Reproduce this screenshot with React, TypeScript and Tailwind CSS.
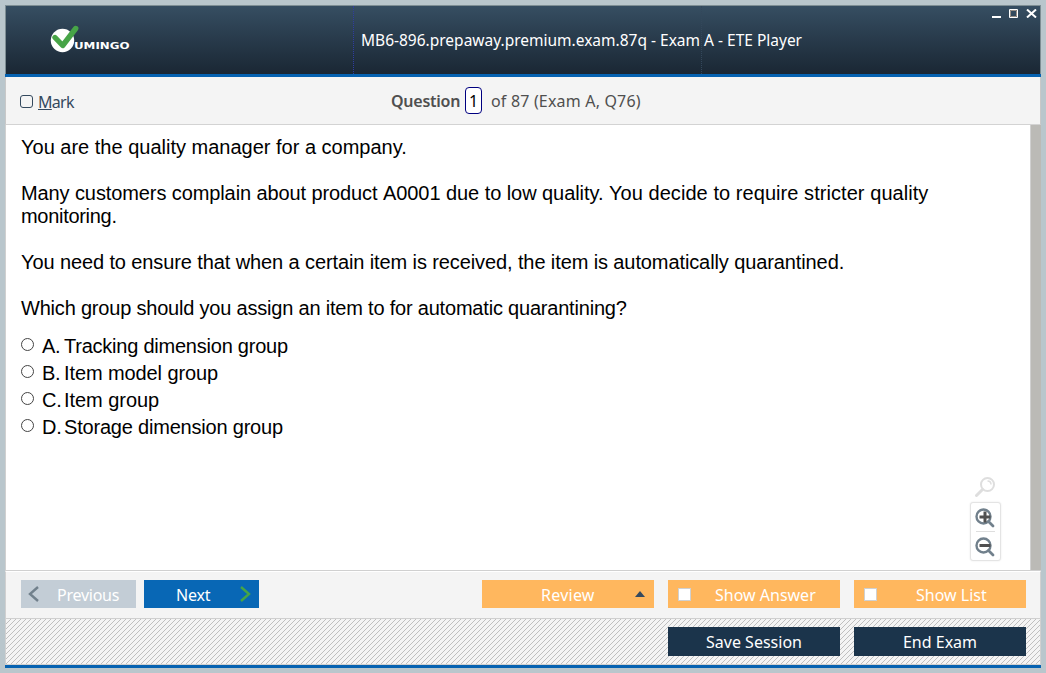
import React from 'react';

const ui = "font-['Noto_Sans',sans-serif]";

function Line({ children, className }: { children: React.ReactNode; className: string }) {
  return <span className={`block whitespace-nowrap ${className}`}>{children}</span>;
}

function Logo() {
  return (
    <svg width="82" height="32" viewBox="0 0 82 32" className="mt-[18px] ml-[43px] block">
      <circle cx="13.5" cy="16.5" r="11.7" fill="#fff" />
      <path d="M6 13.5 L13.7 21.5 L26.7 4.5" fill="none" stroke="#47a447" strokeWidth="5.4" strokeLinecap="round" strokeLinejoin="round" />
      <text x="25" y="25" fill="#fff" fontSize="9.5" fontWeight="bold" fontFamily="DejaVu Sans" textLength="55.5" lengthAdjust="spacingAndGlyphs">UMINGO</text>
    </svg>
  );
}

function Answer({ letter, text, track }: { letter: string; text: string; track: string }) {
  return (
    <label className="flex h-[27px] items-center">
      <span className="mb-[4px] h-[13px] w-[13px] rounded-full border border-[#444] bg-white" />
      <span className="ml-2 w-[22px] tracking-[-0.3px]">{letter}.</span>
      <Line className={track}>{text}</Line>
    </label>
  );
}

function Magnifier({ plus }: { plus: boolean }) {
  return (
    <svg width="20" height="20" viewBox="0 0 20 20" fill="none" className="mr-[2px] shrink-0">
      <circle cx="8.5" cy="8.5" r="7" stroke="#71808c" strokeWidth="2.4" />
      <path d="M13.5 13.5 L18 18" stroke="#71808c" strokeWidth="2.8" strokeLinecap="round" />
      <path d={plus ? 'M4.5 9H15.5M10 3.5V14.5' : 'M4.5 8.5H15.5'} stroke="#505050" strokeWidth="3" />
    </svg>
  );
}

function Hatching() {
  return (
    <svg className="absolute inset-0 h-full w-full" shapeRendering="crispEdges">
      <defs>
        <pattern id="hatch" width="5" height="5" patternUnits="userSpaceOnUse">
          <path d="M4 0h1v1h-1zM3 1h1v1h-1zM2 2h1v1h-1zM1 3h1v1h-1zM0 4h1v1h-1z" fill="#bfbfbf" />
        </pattern>
      </defs>
      <rect width="100%" height="100%" fill="url(#hatch)" />
    </svg>
  );
}

export default function App() {
  return (
    <div className={`h-[673px] w-[1046px] overflow-hidden bg-[#b9c6cc] p-[5px] ${ui}`}>
      <div className="flex h-[663px] w-[1036px] flex-col">
        <header className="flex h-[69px] border border-b-0 border-[#7e8e94] bg-linear-to-b from-[#364e62] to-[#1a2734] text-white">
          <div className="w-[347px] shrink-0"><Logo /></div>
          <div className="w-[349px] shrink-0 border-x border-dotted border-l-[#2f3ca0] border-r-[#33475b] pt-[22px] pl-[7px]">
            <Line className="text-[15.5px] leading-6">MB6-896.prepaway.premium.exam.87q - Exam A - ETE Player</Line>
          </div>
          <div className="flex flex-1 items-start justify-end gap-2 pt-[3px] pr-[3px]">
            <svg width="9" height="9" className="block"><path d="M0 8H9" stroke="#fff" strokeWidth="2" /></svg>
            <svg width="9" height="9" className="block"><path d="M.5 .5H8.5V8.5H.5Z" stroke="#fff" fill="none" /><path d="M1.5 1.5H7.5V7.5H1.5Z" stroke="#998f86" fill="none" /></svg>
            <svg width="11" height="9" className="block"><path d="M1 .5L10 8.5M10 .5L1 8.5" stroke="#fff" strokeWidth="2" /></svg>
          </div>
        </header>
        <div className="h-[3px] bg-[#0562b1]" />
        <div className="flex h-[48px] border-x border-b border-x-[#c8c8c8] border-b-[#d3d3d3] bg-[#f4f4f4]">
          <div className="flex w-[385px] items-start pl-[14px] text-[#34495e]">
            <span className="mt-[18px] h-[13px] w-[13px] rounded-[3px] border border-[#34495e]" />
            <Line className="mt-[13px] ml-[5px] text-[16px] leading-6 tracking-[-0.7px]"><u>M</u>ark</Line>
          </div>
          <div className="flex items-start text-[16px] leading-6 text-[#4f4f4f]">
            <Line className="mt-3 w-[74px] font-semibold tracking-[-0.25px]">Question</Line>
            <span className="mt-[10px] flex h-[27px] w-[17px] items-center justify-center rounded-[4px] border border-[#000080] bg-white text-black">1</span>
            <Line className="mt-3 ml-[9px] tracking-[0.18px]">of 87 (Exam A, Q76)</Line>
          </div>
        </div>
        <main className="flex h-[446px] border-b border-l border-[#d0d0d0] bg-white">
          <div className="relative flex-1 pt-[11px] pl-[15px] font-['Liberation_Sans',sans-serif] text-[20px] leading-[23px] text-black">
            <Line className="">You are the quality manager for a company.</Line>
            <div className="mt-[23px]">
              <Line className="">
                <span className="tracking-[-0.1px]">Many customers complain about product </span>
                <span className="tracking-[-0.06px]">A0001 due to low quality. </span>
                <span className="tracking-[0.06px]">You decide to require stricter quality</span>
              </Line>
              <Line className="tracking-[-0.3px]">monitoring.</Line>
            </div>
            <Line className="mt-[23px] tracking-[-0.105px]">You need to ensure that when a certain item is received, the item is automatically quarantined.</Line>
            <Line className="mt-[23px] tracking-[-0.2px]">Which group should you assign an item to for automatic quarantining?</Line>
            <div className="mt-[13px]">
              <Answer letter="A" text="Tracking dimension group" track="tracking-[-0.23px]" />
              <Answer letter="B" text="Item model group" track="tracking-[-0.1px]" />
              <Answer letter="C" text="Item group" track="tracking-[-0.05px]" />
              <Answer letter="D" text="Storage dimension group" track="tracking-[-0.2px]" />
            </div>
            <div className="absolute top-[352px] left-[964px] flex w-[31px] flex-col items-center">
              <svg width="20" height="20" viewBox="0 0 20 20" fill="none" stroke="#dedede" className="mr-[2px]">
                <circle cx="12.5" cy="7.5" r="6.5" strokeWidth="2" />
                <path d="M7.5 12.5L1.5 18.5" strokeWidth="3" strokeLinecap="round" />
                <path d="M12.5 4Q16 4 16 7.5" strokeWidth="1.5" />
              </svg>
              <div className="mt-[5px] flex h-[59px] w-[31px] flex-col items-center rounded-[3px] border border-[#e4e4e4] bg-white pt-[5px] shadow-[0_0_2px_#e8e8e8]">
                <Magnifier plus={true} />
                <div className="mt-[3px] mb-[5px] h-px w-[19px] shrink-0 bg-[#dedede]" />
                <Magnifier plus={false} />
              </div>
            </div>
          </div>
          <div className="w-[11px] border-l border-[#d0d0d0] bg-[#bbbab6]" />
        </main>
        <div className="flex h-[48px] items-start border-x border-t border-b border-x-[#d0d0d0] border-t-white border-b-[#d0d0d0] bg-[#f4f4f4] pt-[8px] pl-[15px] text-[16px] text-white">
          <button className="flex h-7 w-[115px] items-center bg-[#c3cdd6]">
            <svg width="12" height="16" className="ml-[7px] shrink-0" fill="none"><path d="M10 1L2 8L10 15" stroke="#71808c" strokeWidth="2.4" /></svg>
            <Line className="ml-[17px] pt-[2px] tracking-[-0.25px]">Previous</Line>
          </button>
          <button className="ml-2 flex h-7 w-[115px] items-center bg-[#0867b5]">
            <Line className="ml-[32px] w-[64px] pt-[2px] text-left tracking-[-0.2px]">Next</Line>
            <svg width="12" height="16" fill="none"><path d="M1 1L9 8L1 15" stroke="#46a546" strokeWidth="2.4" /></svg>
          </button>
          <button className="ml-[223px] flex h-7 w-[172px] items-center bg-[#ffb75e]">
            <Line className="ml-[59px] w-[94px] pt-[2px] text-left tracking-[0.25px]">Review</Line>
            <svg width="10" height="6"><path d="M0 6L5 0L10 6Z" fill="#34495e" /></svg>
          </button>
          <button className="ml-[14px] flex h-7 w-[172px] items-center bg-[#ffb75e]">
            <span className="ml-[10px] h-[13px] w-[13px] border border-[#d0d0d0] bg-white" />
            <Line className="ml-[24px] pt-[2px]">Show Answer</Line>
          </button>
          <button className="ml-[14px] flex h-7 w-[172px] items-center bg-[#ffb75e]">
            <span className="ml-[10px] h-[13px] w-[13px] border border-[#d0d0d0] bg-white" />
            <Line className="ml-[39px] pt-[2px]">Show List</Line>
          </button>
        </div>
        <div className="relative flex h-[46px] items-start justify-end gap-[14px] border-x border-b border-[#d0d0d0] bg-[#f4f4f4] pt-2 pr-[14px] text-[16px] text-white">
          <Hatching />
          <button className="relative h-[29px] w-[172px] bg-[#1b344b] pt-px">Save Session</button>
          <button className="relative h-[29px] w-[172px] bg-[#1b344b] pt-px">End Exam</button>
        </div>
        <div className="h-[3px] bg-[#0562b1]" />
      </div>
    </div>
  );
}
